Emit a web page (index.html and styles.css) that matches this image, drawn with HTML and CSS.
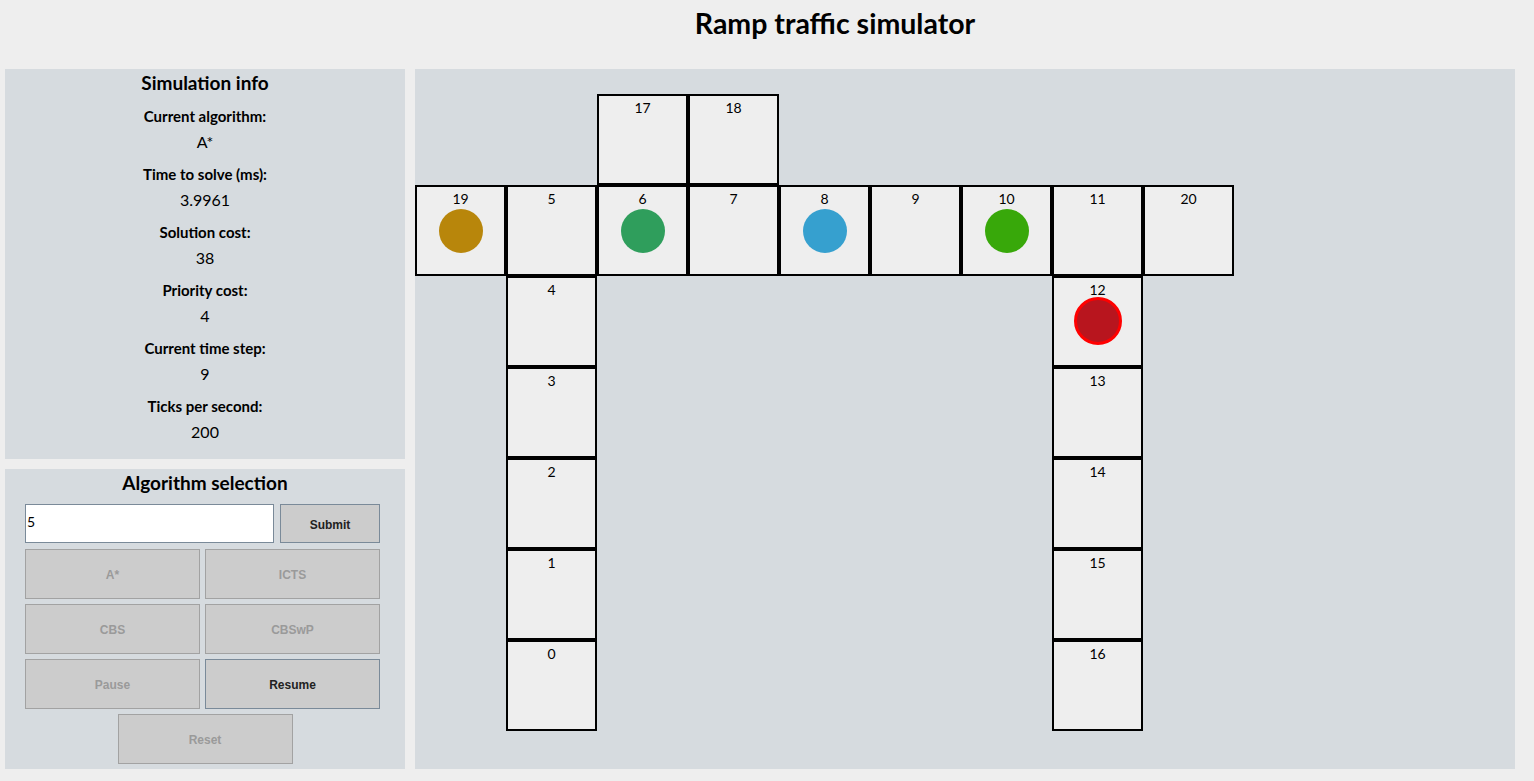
FILE: index.html
```html
<!DOCTYPE html>
<html lang="en">
<head>
<meta charset="utf-8">
<title>Ramp traffic simulator</title>
<link rel="stylesheet" href="styles.css">
</head>
<body>
<header class="header"><h1 class="title">Ramp traffic simulator</h1></header>
<main class="main">
  <div class="sidebar">
    <section class="panel info">
      <h2 class="panel-title">Simulation info</h2>
      <div class="label">Current algorithm:</div>
      <div class="value">A*</div>
      <div class="label">Time to solve (ms):</div>
      <div class="value">3.9961</div>
      <div class="label">Solution cost:</div>
      <div class="value">38</div>
      <div class="label">Priority cost:</div>
      <div class="value">4</div>
      <div class="label">Current time step:</div>
      <div class="value">9</div>
      <div class="label">Ticks per second:</div>
      <div class="value">200</div>
    </section>
    <section class="panel algo">
      <h2 class="panel-title">Algorithm selection</h2>
      <div class="input-row">
        <input class="text-input" type="text" value="5">
        <button class="btn btn-active submit">Submit</button>
      </div>
      <div class="btn-grid">
        <button class="btn" disabled>A*</button>
        <button class="btn" disabled>ICTS</button>
        <button class="btn" disabled>CBS</button>
        <button class="btn" disabled>CBSwP</button>
        <button class="btn" disabled>Pause</button>
        <button class="btn btn-active">Resume</button>
      </div>
      <div class="reset-row"><button class="btn" disabled>Reset</button></div>
    </section>
  </div>
  <section class="panel board">
    <div class="map">
      <div class="cell c2 r1"><span class="num">17</span></div>
      <div class="cell c3 r1"><span class="num">18</span></div>

      <div class="cell c0 r2"><span class="num">19</span><span class="car gold"></span></div>
      <div class="cell c1 r2"><span class="num">5</span></div>
      <div class="cell c2 r2"><span class="num">6</span><span class="car green"></span></div>
      <div class="cell c3 r2"><span class="num">7</span></div>
      <div class="cell c4 r2"><span class="num">8</span><span class="car blue"></span></div>
      <div class="cell c5 r2"><span class="num">9</span></div>
      <div class="cell c6 r2"><span class="num">10</span><span class="car lime"></span></div>
      <div class="cell c7 r2"><span class="num">11</span></div>
      <div class="cell c8 r2"><span class="num">20</span></div>

      <div class="cell c1 r3"><span class="num">4</span></div>
      <div class="cell c1 r4"><span class="num">3</span></div>
      <div class="cell c1 r5"><span class="num">2</span></div>
      <div class="cell c1 r6"><span class="num">1</span></div>
      <div class="cell c1 r7"><span class="num">0</span></div>

      <div class="cell c7 r3"><span class="num">12</span><span class="car red"></span></div>
      <div class="cell c7 r4"><span class="num">13</span></div>
      <div class="cell c7 r5"><span class="num">14</span></div>
      <div class="cell c7 r6"><span class="num">15</span></div>
      <div class="cell c7 r7"><span class="num">16</span></div>
    </div>
  </section>
</main>
</body>
</html>
```
FILE: styles.css
```css
* { box-sizing: border-box; }
html, body { margin: 0; padding: 0; }
body {
  background: #eeeeee;
  font-family: Lato, "Open Sans", sans-serif;
  color: #000;
  width: 1534px;
  height: 781px;
  overflow: hidden;
}
.header {
  height: 69px;
  padding-left: 136px;
  text-align: center;
}
.title {
  margin: 0;
  padding-top: 6px;
  font-size: 28.5px;
  line-height: 34px;
  font-weight: 700;
}
.main {
  display: flex;
  gap: 10px;
  padding: 0 5px;
}
.sidebar {
  display: flex;
  flex-direction: column;
  gap: 10px;
  width: 400px;
}
.panel { background: #d6dbdf; }
.info {
  height: 390px;
  text-align: center;
}
.panel-title {
  margin: 0;
  font-size: 19px;
  line-height: 28px;
  font-weight: 700;
  text-align: center;
}
.label {
  margin-top: 6px;
  font-size: 15px;
  line-height: 26px;
  font-weight: 700;
}
.value {
  font-size: 16px;
  line-height: 26px;
}
.algo {
  height: 300px;
  padding: 0 20px;
}
.input-row {
  display: flex;
  gap: 6px;
  margin-top: 7px;
}
.text-input {
  width: 249px;
  height: 39px;
  border: 1px solid #7a8a99;
  background: #fff;
  padding: 0 1px 5px;
  font-family: Lato, sans-serif;
  font-size: 14px;
  color: #000;
  outline: none;
}
.btn {
  height: 50px;
  border: 1px solid #a2a2a2;
  background: #cccccc;
  color: #9a9a9a;
  font-family: "Liberation Sans", Arial, sans-serif;
  font-size: 12px;
  font-weight: 700;
  padding: 2px 0 0;
}
.btn-active {
  border-color: #7a8a99;
  color: #222;
}
.submit {
  width: 100px;
  height: 39px;
}
.btn-grid {
  display: grid;
  grid-template-columns: 175px 175px;
  grid-auto-rows: 50px;
  gap: 5px;
  margin-top: 6px;
}
.reset-row {
  display: flex;
  justify-content: center;
  margin-top: 5px;
}
.reset-row .btn { width: 175px; }
.board {
  width: 1100px;
  height: 700px;
  padding-top: 25px;
}
.map {
  display: grid;
  grid-template-columns: repeat(9, 91px);
  grid-template-rows: repeat(7, 91px);
}
.cell {
  display: grid;
  border: 2px solid #000;
  background: #eeeeee;
}
.cell > * { grid-area: 1 / 1; }
.num {
  align-self: start;
  justify-self: center;
  margin-top: 4px;
  font-size: 14px;
  line-height: 16px;
}
.car {
  align-self: center;
  justify-self: center;
  width: 44px;
  height: 44px;
  border-radius: 50%;
}
.gold { background: #b8860b; }
.green { background: #2f9e5c; }
.blue { background: #36a0cf; }
.lime { background: #38a80a; }
.red {
  width: 48px;
  height: 48px;
  margin-top: -2px;
  background: #b8151e;
  border: 3px solid #ff0000;
}
.c0 { grid-column: 1; }
.c1 { grid-column: 2; }
.c2 { grid-column: 3; }
.c3 { grid-column: 4; }
.c4 { grid-column: 5; }
.c5 { grid-column: 6; }
.c6 { grid-column: 7; }
.c7 { grid-column: 8; }
.c8 { grid-column: 9; }
.r1 { grid-row: 1; }
.r2 { grid-row: 2; }
.r3 { grid-row: 3; }
.r4 { grid-row: 4; }
.r5 { grid-row: 5; }
.r6 { grid-row: 6; }
.r7 { grid-row: 7; }
```
